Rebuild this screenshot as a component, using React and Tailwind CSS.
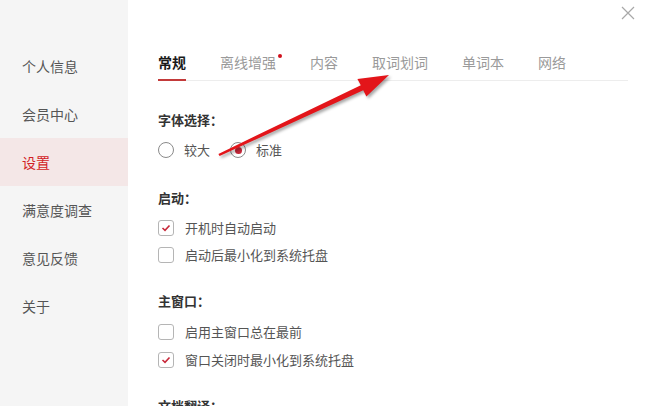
import React from "react";

const font = { fontFamily: '"Noto Sans CJK SC", "Noto Sans", sans-serif' };

function Checkbox({ checked }) {
  return (
    <span className="w-[16px] h-[16px] rounded-[3px] border border-[#b5b5b5] bg-white flex items-center justify-center shrink-0">
      {checked && (
        <svg width="10" height="8" viewBox="0 0 10 8">
          <path d="M1.5 4 L4 6.3 L8.5 1.5" fill="none" stroke="#c8283a" strokeWidth="1.6" />
        </svg>
      )}
    </span>
  );
}

function Radio({ checked }) {
  return (
    <span className="w-[16px] h-[16px] rounded-full border border-[#8a8a8a] bg-white flex items-center justify-center shrink-0">
      {checked && <span className="w-[7px] h-[7px] rounded-full bg-[#c8283a]" />}
    </span>
  );
}

function Row({ checked, children, className = "" }) {
  return (
    <div className={"flex items-center gap-[11px] h-[20px] " + className}>
      <Checkbox checked={checked} />
      <span className="text-[13px] leading-[20px] text-[#555]">{children}</span>
    </div>
  );
}

function Label({ children, className = "" }) {
  return (
    <div className={"text-[13px] leading-[20px] font-semibold text-[#333] " + className}>{children}</div>
  );
}

export default function App() {
  const side = ["个人信息", "会员中心", "设置", "满意度调查", "意见反馈", "关于"];
  const tabs = ["常规", "离线增强", "内容", "取词划词", "单词本", "网络"];
  return (
    <div className="relative w-[651px] h-[406px] overflow-hidden bg-white flex" style={font}>
      <div className="w-[128px] h-full bg-[#f5f5f5] pt-[42px] shrink-0">
        {side.map((s) => (
          <div
            key={s}
            className={
              "h-[48px] flex items-center pl-[22px] text-[14px] " +
              (s === "设置" ? "bg-[#f4e7e7] text-[#d21e26]" : "text-[#555]")
            }
          >
            {s}
          </div>
        ))}
      </div>

      <div className="flex-1 pl-[30px] pt-[52px]">
        <div className="flex gap-[34px] w-[470px] border-b border-[#ededed]">
          {tabs.map((t, i) => (
            <div
              key={t}
              className={
                "relative text-[14px] leading-[20px] " +
                (i === 0
                  ? "font-semibold text-[#1a1a1a] pb-[6px] border-b-2 border-[#c33a3a] -mb-px"
                  : "text-[#9a9a9a] pb-[8px]")
              }
            >
              {t}
              {i === 1 && (
                <span className="absolute right-[-6px] top-[2px] w-[4px] h-[4px] rounded-full bg-[#d0101c]" />
              )}
            </div>
          ))}
        </div>

        <Label className="mt-[29px]">字体选择：</Label>
        <div className="flex items-center mt-[10px] h-[20px]">
          <Radio />
          <span className="ml-[10px] text-[13px] text-[#555]">较大</span>
          <span className="ml-[20px]">
            <Radio checked />
          </span>
          <span className="ml-[10px] text-[13px] text-[#555]">标准</span>
        </div>

        <Label className="mt-[28px]">启动：</Label>
        <Row checked className="mt-[10px]">开机时自动启动</Row>
        <Row className="mt-[7px]">启动后最小化到系统托盘</Row>

        <Label className="mt-[26px]">主窗口：</Label>
        <Row className="mt-[11px]">启用主窗口总在最前</Row>
        <Row checked className="mt-[8px]">窗口关闭时最小化到系统托盘</Row>

        <Label className="mt-[26px]">文档翻译：</Label>
      </div>

      <svg className="absolute left-[621px] top-[6px]" width="14" height="14" viewBox="0 0 14 14">
        <path d="M1 1 L13 13 M13 1 L1 13" stroke="#a8a8a8" strokeWidth="1.2" />
      </svg>

      <svg
        className="absolute left-0 top-0 pointer-events-none"
        width="651"
        height="406"
        style={{ filter: "drop-shadow(2px 2px 1.5px rgba(0,0,0,0.35))" }}
      >
        <polygon
          points="218.4,153.9 360.8,85.3 357.4,79 389,75 366.4,96.6 363.2,90.3 219.6,156.1"
          fill="#e3151a"
        />
      </svg>
    </div>
  );
}
